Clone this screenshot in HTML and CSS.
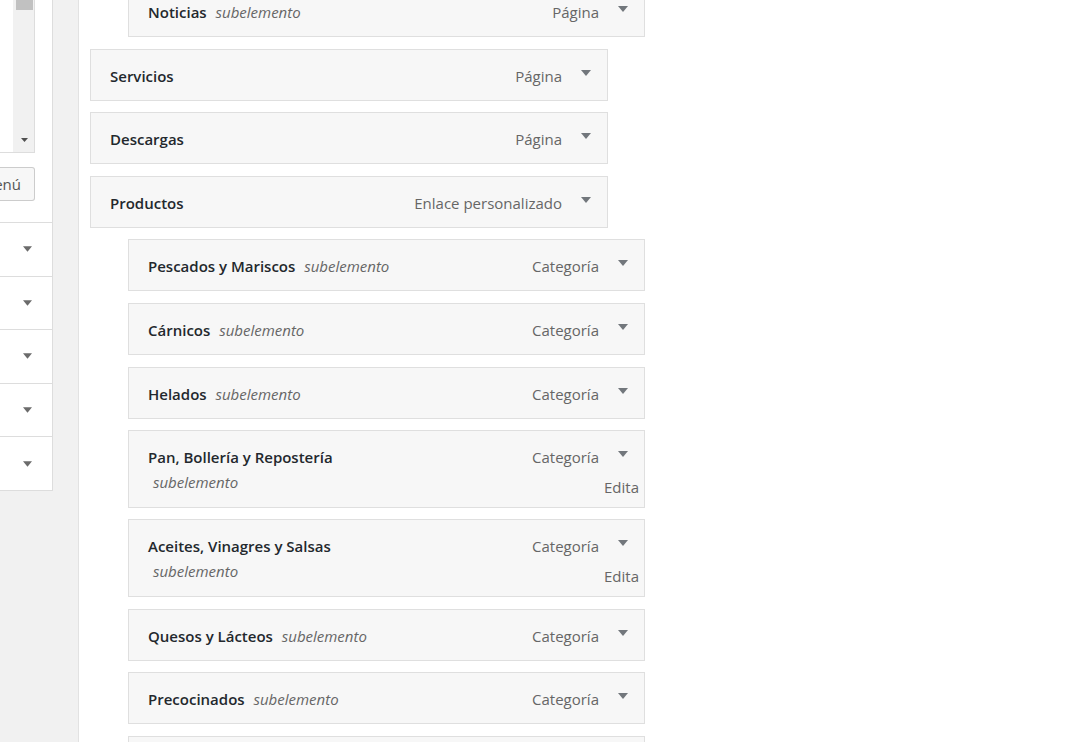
FILE: index.html
```html
<!DOCTYPE html>
<html lang="es">
<head>
<meta charset="utf-8">
<title>Menús</title>
<link rel="stylesheet" href="styles.css">
</head>
<body>
<aside class="side">
  <div class="picker">
    <div class="listbox">
      <div class="scrollbar">
        <span class="thumb"></span>
        <svg class="sb-arrow" width="7" height="4" viewBox="0 0 7 4"><polygon points="0,0 7,0 3.5,4"/></svg>
      </div>
    </div>
    <div class="btn"><span>Añadir al menú</span></div>
  </div>
  <div class="acc-row"><svg class="acc-arrow" width="9" height="6" viewBox="0 0 10 6"><polygon points="0,0 10,0 5,6"/></svg></div>
  <div class="acc-row"><svg class="acc-arrow" width="9" height="6" viewBox="0 0 10 6"><polygon points="0,0 10,0 5,6"/></svg></div>
  <div class="acc-row"><svg class="acc-arrow" width="9" height="6" viewBox="0 0 10 6"><polygon points="0,0 10,0 5,6"/></svg></div>
  <div class="acc-row"><svg class="acc-arrow" width="9" height="6" viewBox="0 0 10 6"><polygon points="0,0 10,0 5,6"/></svg></div>
  <div class="acc-row last"><svg class="acc-arrow" width="9" height="6" viewBox="0 0 10 6"><polygon points="0,0 10,0 5,6"/></svg></div>
</aside>
<main class="main">
  <ul class="menu">
    <li class="item child">
      <div class="title">Noticias <span class="sub">subelemento</span></div>
      <div class="controls"><div class="ctl-row"><span>Página</span><svg class="arrow" width="10" height="6" viewBox="0 0 10 6"><polygon points="0,0 10,0 5,6"/></svg></div><span class="edit">Edita</span></div>
    </li>
    <li class="item">
      <div class="title">Servicios</div>
      <div class="controls"><div class="ctl-row"><span>Página</span><svg class="arrow" width="10" height="6" viewBox="0 0 10 6"><polygon points="0,0 10,0 5,6"/></svg></div><span class="edit">Edita</span></div>
    </li>
    <li class="item">
      <div class="title">Descargas</div>
      <div class="controls"><div class="ctl-row"><span>Página</span><svg class="arrow" width="10" height="6" viewBox="0 0 10 6"><polygon points="0,0 10,0 5,6"/></svg></div><span class="edit">Edita</span></div>
    </li>
    <li class="item">
      <div class="title">Productos</div>
      <div class="controls"><div class="ctl-row"><span>Enlace personalizado</span><svg class="arrow" width="10" height="6" viewBox="0 0 10 6"><polygon points="0,0 10,0 5,6"/></svg></div><span class="edit">Edita</span></div>
    </li>
    <li class="item child">
      <div class="title">Pescados y Mariscos <span class="sub">subelemento</span></div>
      <div class="controls"><div class="ctl-row"><span>Categoría</span><svg class="arrow" width="10" height="6" viewBox="0 0 10 6"><polygon points="0,0 10,0 5,6"/></svg></div><span class="edit">Edita</span></div>
    </li>
    <li class="item child">
      <div class="title">Cárnicos <span class="sub">subelemento</span></div>
      <div class="controls"><div class="ctl-row"><span>Categoría</span><svg class="arrow" width="10" height="6" viewBox="0 0 10 6"><polygon points="0,0 10,0 5,6"/></svg></div><span class="edit">Edita</span></div>
    </li>
    <li class="item child">
      <div class="title">Helados <span class="sub">subelemento</span></div>
      <div class="controls"><div class="ctl-row"><span>Categoría</span><svg class="arrow" width="10" height="6" viewBox="0 0 10 6"><polygon points="0,0 10,0 5,6"/></svg></div><span class="edit">Edita</span></div>
    </li>
    <li class="item child tall">
      <div class="title">Pan, Bollería y Repostería <span class="sub sub-line">subelemento</span></div>
      <div class="controls"><div class="ctl-row"><span>Categoría</span><svg class="arrow" width="10" height="6" viewBox="0 0 10 6"><polygon points="0,0 10,0 5,6"/></svg></div><span class="edit">Edita</span></div>
    </li>
    <li class="item child tall">
      <div class="title">Aceites, Vinagres y Salsas <span class="sub sub-line">subelemento</span></div>
      <div class="controls"><div class="ctl-row"><span>Categoría</span><svg class="arrow" width="10" height="6" viewBox="0 0 10 6"><polygon points="0,0 10,0 5,6"/></svg></div><span class="edit">Edita</span></div>
    </li>
    <li class="item child">
      <div class="title">Quesos y Lácteos <span class="sub">subelemento</span></div>
      <div class="controls"><div class="ctl-row"><span>Categoría</span><svg class="arrow" width="10" height="6" viewBox="0 0 10 6"><polygon points="0,0 10,0 5,6"/></svg></div><span class="edit">Edita</span></div>
    </li>
    <li class="item child">
      <div class="title">Precocinados <span class="sub">subelemento</span></div>
      <div class="controls"><div class="ctl-row"><span>Categoría</span><svg class="arrow" width="10" height="6" viewBox="0 0 10 6"><polygon points="0,0 10,0 5,6"/></svg></div><span class="edit">Edita</span></div>
    </li>
    <li class="item child">
      <div class="title">Congelados <span class="sub">subelemento</span></div>
      <div class="controls"><div class="ctl-row"><span>Categoría</span><svg class="arrow" width="10" height="6" viewBox="0 0 10 6"><polygon points="0,0 10,0 5,6"/></svg></div><span class="edit">Edita</span></div>
    </li>
  </ul>
</main>
</body>
</html>
```
FILE: styles.css
```css
* { box-sizing: border-box; }
html, body { margin: 0; height: 100%; }
body {
  background: #f1f1f1;
  font-family: "Open Sans", "Noto Sans", sans-serif;
  font-size: 15px;
  color: #23282d;
  display: flex;
  gap: 25px;
  overflow: hidden;
}

/* left column */
.side {
  width: 53px;
  flex: none;
  align-self: flex-start;
  background: #fff;
  border-right: 1px solid #dddddd;
  border-bottom: 1px solid #dddddd;
  overflow: hidden;
}
.picker {
  padding: 0 17px 21px 0;
  border-bottom: 1px solid #dddddd;
}
.listbox {
  height: 153px;
  border-right: 1px solid #dddddd;
  border-bottom: 1px solid #dddddd;
  display: flex;
  justify-content: flex-end;
}
.scrollbar {
  width: 21px;
  background: #f1f1f1;
  display: flex;
  flex-direction: column;
  justify-content: space-between;
  align-items: center;
  padding: 0 0 10px 1px;
}
.thumb {
  width: 17px;
  height: 10px;
  background: #c1c1c1;
}
.sb-arrow { fill: #505050; }
.btn {
  margin-top: 14px;
  height: 34px;
  border: 1px solid #cccccc;
  border-left: none;
  border-radius: 0 3px 3px 0;
  background: #f7f7f7;
  display: flex;
  justify-content: flex-end;
  align-items: center;
  padding-right: 13px;
  white-space: nowrap;
  overflow: hidden;
  color: #555555;
}
.acc-row {
  height: 53.6px;
  border-bottom: 1px solid #dddddd;
  display: flex;
  justify-content: flex-end;
  align-items: center;
  padding-right: 20px;
}
.acc-row.last { border-bottom: none; height: 52.6px; }
.acc-arrow { fill: #6b6b6b; }

/* main menu structure */
.main {
  flex: 1;
  background: #fff;
  border-left: 1px solid #e2e2e2;
  padding-left: 11px;
}
.menu {
  list-style: none;
  margin: -15px 0 0;
  padding: 0;
  display: flex;
  flex-direction: column;
  gap: 11.6px;
}
.item {
  width: 518px;
  height: 52px;
  flex: none;
  border: 1px solid #dfdfdf;
  background: #f7f7f7;
  display: flex;
  justify-content: space-between;
  padding: 0 5px 0 19px;
  overflow: hidden;
}
.item.child { margin-left: 38px; width: 517px; }
.item.tall { height: 77.6px; }
.title {
  padding-top: 16px;
  line-height: 20px;
  font-weight: 600;
  color: #23282d;
  white-space: nowrap;
}
.sub {
  font-style: italic;
  font-weight: 400;
  color: #666666;
  margin-left: 5px;
}
.sub-line {
  display: block;
  margin-top: 5px;
}
.controls {
  flex: none;
  padding-top: 16px;
  display: flex;
  flex-direction: column;
  align-items: flex-end;
}
.ctl-row {
  display: flex;
  align-items: flex-start;
  line-height: 20px;
  color: #666666;
}
.arrow {
  fill: #72777c;
  margin: 4px 11px 0 19px;
}
.edit {
  line-height: 20px;
  margin-top: 10px;
  color: #666666;
}
```
